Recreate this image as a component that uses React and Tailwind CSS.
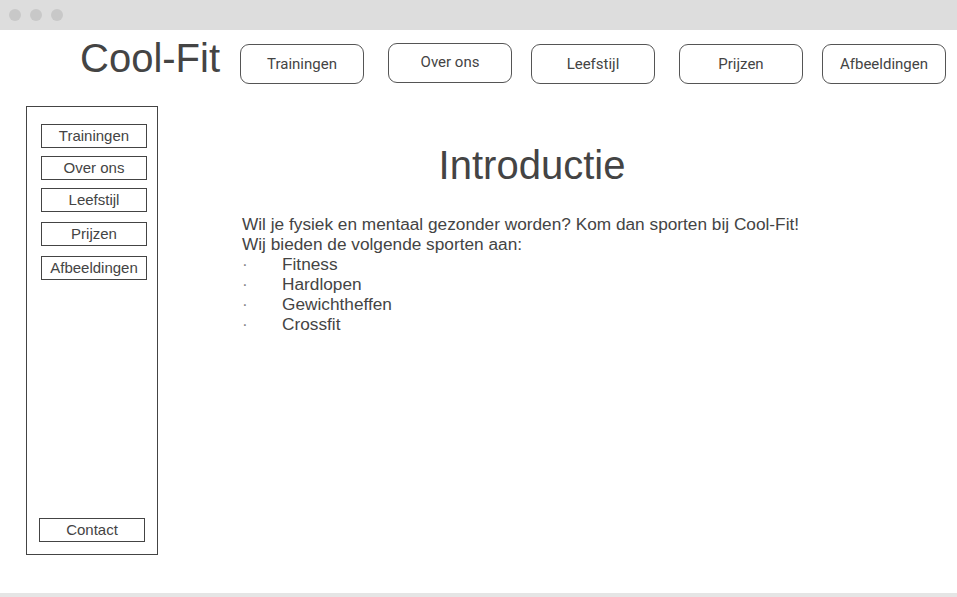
const navItems = [
  { label: 'Trainingen', cls: 'ml-0 mt-[14px]' },
  { label: 'Over ons', cls: 'ml-[24px] mt-[13px] pb-[2px]' },
  { label: 'Leefstijl', cls: 'ml-[19px] mt-[14px]' },
  { label: 'Prijzen', cls: 'ml-[24px] mt-[14px]' },
  { label: 'Afbeeldingen', cls: 'ml-[19px] mt-[14px]' },
];

const sideItems = [
  { label: 'Trainingen', cls: 'mt-0' },
  { label: 'Over ons', cls: 'mt-[8px]' },
  { label: 'Leefstijl', cls: 'mt-[8px]' },
  { label: 'Prijzen', cls: 'mt-[10px]' },
  { label: 'Afbeeldingen', cls: 'mt-[10px]' },
];

const sports = ['Fitness', 'Hardlopen', 'Gewichtheffen', 'Crossfit'];

export default function App() {
  return (
    <div
      className="flex h-[597px] w-[957px] flex-col overflow-hidden bg-white text-[#444444]"
      style={{ fontFamily: '"Liberation Sans", Arial, sans-serif' }}
    >
      {/* window chrome */}
      <div className="flex h-[30px] items-center gap-[9px] bg-[#dddddd] pl-[9px]">
        <span className="h-[12px] w-[12px] rounded-full bg-[#c8c8c8]" />
        <span className="h-[12px] w-[12px] rounded-full bg-[#c8c8c8]" />
        <span className="h-[12px] w-[12px] rounded-full bg-[#c8c8c8]" />
      </div>

      {/* header */}
      <div className="flex h-[76px] items-start">
        <div className="ml-[80px] mt-[5px] w-[160px] text-[40px] leading-[46px]">Cool-Fit</div>
        {navItems.map((item) => (
          <div
            key={item.label}
            className={`flex h-[40px] w-[124px] items-center justify-center rounded-[9px] border border-[#555555] text-[15px] ${item.cls}`}
            style={{ fontFamily: 'Roboto, "Liberation Sans", sans-serif' }}
          >
            {item.label}
          </div>
        ))}
      </div>

      <div className="flex flex-1">
        {/* sidebar */}
        <div className="ml-[26px] flex h-[449px] w-[132px] flex-col border border-[#444444] px-[14px] pb-[12px] pt-[17px]">
          {sideItems.map((item) => (
            <div
              key={item.label}
              className={`flex h-[24px] w-[106px] items-center justify-center border border-[#444444] text-[15px] ${item.cls}`}
            >
              {item.label}
            </div>
          ))}
          <div className="-ml-[2px] mt-auto flex h-[24px] w-[106px] items-center justify-center border border-[#444444] text-[15px]">
            Contact
          </div>
        </div>

        {/* content */}
        <div className="ml-[84px] w-[580px] pt-[36px]">
          <h1 className="text-center text-[40px] leading-[46px]">Introductie</h1>
          <div className="mt-[26px] text-[17.25px] leading-[20px]">
            <p>Wil je fysiek en mentaal gezonder worden? Kom dan sporten bij Cool-Fit!</p>
            <p>Wij bieden de volgende sporten aan:</p>
            <ul>
              {sports.map((s) => (
                <li key={s} className="flex">
                  <span className="w-[40px] text-[#888888]">·</span>
                  <span>{s}</span>
                </li>
              ))}
            </ul>
          </div>
        </div>
      </div>

      <div className="h-[4px] bg-[#e5e5e5]" />
    </div>
  );
}
